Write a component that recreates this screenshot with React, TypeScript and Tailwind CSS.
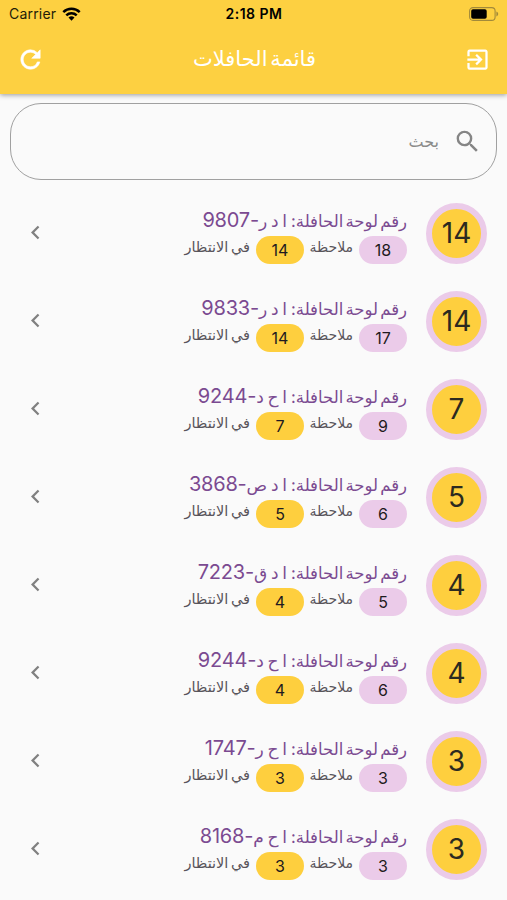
import React from "react";
import { MdExitToApp, MdSearch, MdChevronLeft } from "react-icons/md";

type Bus = {
  total: number;
  letters: string;
  plate: string;
  notes: number;
  waiting: number;
};

const buses: Bus[] = [
  { total: 14, letters: "ا د ر", plate: "9807", notes: 18, waiting: 14 },
  { total: 14, letters: "ا د ر", plate: "9833", notes: 17, waiting: 14 },
  { total: 7, letters: "ا ح د", plate: "9244", notes: 9, waiting: 7 },
  { total: 5, letters: "ا د ص", plate: "3868", notes: 6, waiting: 5 },
  { total: 4, letters: "ا د ق", plate: "7223", notes: 5, waiting: 4 },
  { total: 4, letters: "ا ح د", plate: "9244", notes: 6, waiting: 4 },
  { total: 3, letters: "ا ح ر", plate: "1747", notes: 3, waiting: 3 },
  { total: 3, letters: "ا ح م", plate: "8168", notes: 3, waiting: 3 },
];

function StatusBar() {
  return (
    <div dir="ltr" className="grid h-7 grid-cols-3 items-center pl-[9px] pr-2 text-sm text-[#231c08]">
      <div className="flex items-center gap-1.5">
        <span className="tracking-[0.2px]">Carrier</span>
        <svg width="19" height="14" viewBox="0 0 19 14" fill="none" stroke="#000" strokeWidth="2.5">
          <path d="M1.3 5.2a11.7 11.7 0 0 1 16.4 0" />
          <path d="M4.3 8.4a7.4 7.4 0 0 1 10.4 0" />
          <path d="M9.5 13.7 6.5 10.6a4.3 4.3 0 0 1 6 0Z" fill="#000" stroke="none" />
        </svg>
      </div>
      <span className="text-center font-semibold tracking-[0.5px] text-black">2:18 PM</span>
      <svg className="justify-self-end" width="30" height="14" viewBox="0 0 30 14">
        <rect x="0.6" y="0.6" width="25.5" height="12.8" rx="3.4" fill="none" stroke="#a38a3a" strokeWidth="1.1" />
        <rect x="2.2" y="2.2" width="15.5" height="9.6" rx="1.8" fill="#000" />
        <path d="M27.4 4.6c2.4.8 2.4 4 0 4.8Z" fill="#a38a3a" />
      </svg>
    </div>
  );
}

function RefreshIcon() {
  return (
    <svg className="size-[29px]" viewBox="0 0 24 24" fill="currentColor" stroke="currentColor" strokeWidth="0.5">
      <path d="M17.65 6.35A7.958 7.958 0 0 0 12 4c-4.42 0-7.99 3.58-7.99 8s3.57 8 7.99 8c3.73 0 6.84-2.55 7.73-6h-2.08A5.99 5.99 0 0 1 12 18c-3.31 0-6-2.69-6-6s2.69-6 6-6c1.66 0 3.14.69 4.22 1.78L13 11h7V4l-2.35 2.35z" />
    </svg>
  );
}

function Pill({ value, color }: { value: number; color: string }) {
  return (
    <span className={`flex h-7 w-12 shrink-0 items-center justify-center rounded-full text-base text-[#1f1a20] ${color}`}>
      {value}
    </span>
  );
}

function BusRow({ bus }: { bus: Bus }) {
  return (
    <li className="flex h-[88px] items-center pr-5 pl-[22px]">
      <div className="flex size-[61px] shrink-0 items-center justify-center rounded-full border-[6px] border-[#ebcbe9] bg-[#fecf3e] text-[28px] text-[#2c2a20]">
        {bus.total}
      </div>
      <div className="mr-[19px] flex flex-1 flex-col pt-1.5">
        <div className="flex h-[28px] items-baseline whitespace-nowrap leading-[25px] text-[#7b4a91]">
          <span className="text-[16.5px] [word-spacing:-2.5px]">رقم لوحة الحافلة:</span>
          <span className="mr-1 text-[17px] [word-spacing:-1px]">{bus.letters}</span>
          <span dir="ltr" className="text-[20px] tracking-[-0.2px]">
            {bus.plate}-
          </span>
        </div>
        <div className="flex h-7 items-start whitespace-nowrap text-[#58545a]">
          <Pill value={bus.notes} color="bg-[#ebcbe9]" />
          <span className="mr-1.5 w-[44px] text-[14px] leading-[21px]">ملاحظة</span>
          <span className="mr-[5px] flex">
            <Pill value={bus.waiting} color="bg-[#fecf3e]" />
          </span>
          <span className="mr-1.5 text-[14.5px] leading-[21px] [word-spacing:-1.5px]">في الانتظار</span>
        </div>
      </div>
      <MdChevronLeft className="mb-0.5 size-[27px] text-[#808080]" />
    </li>
  );
}

export default function App() {
  return (
    <div
      dir="rtl"
      className="h-[900px] w-[507px] overflow-hidden bg-[#fafafa] font-['Inter','DejaVu_Sans',sans-serif]"
    >
      <header className="relative h-[94px] bg-[#fdd041] shadow-[0_1px_5px_rgba(0,0,0,0.4)]">
        <StatusBar />
        <div className="flex h-[63px] items-center justify-between px-4 text-white">
          <MdExitToApp className="size-[27px]" />
          <h1 className="pb-0.5 text-[21px] [word-spacing:-3px]">قائمة الحافلات</h1>
          <RefreshIcon />
        </div>
      </header>

      <div className="mx-2.5 mt-[9px] flex h-[77px] items-center rounded-[31px] border-[1.5px] border-[#a0a0a0] pr-[14px]">
        <MdSearch className="size-[29px] text-[#858585]" />
        <span className="mr-[14px] pb-0.5 text-[16px] text-[#8a8a8a]">بحث</span>
      </div>

      <ul className="mt-[9px]">
        {buses.map((bus, i) => (
          <BusRow key={i} bus={bus} />
        ))}
      </ul>
    </div>
  );
}
